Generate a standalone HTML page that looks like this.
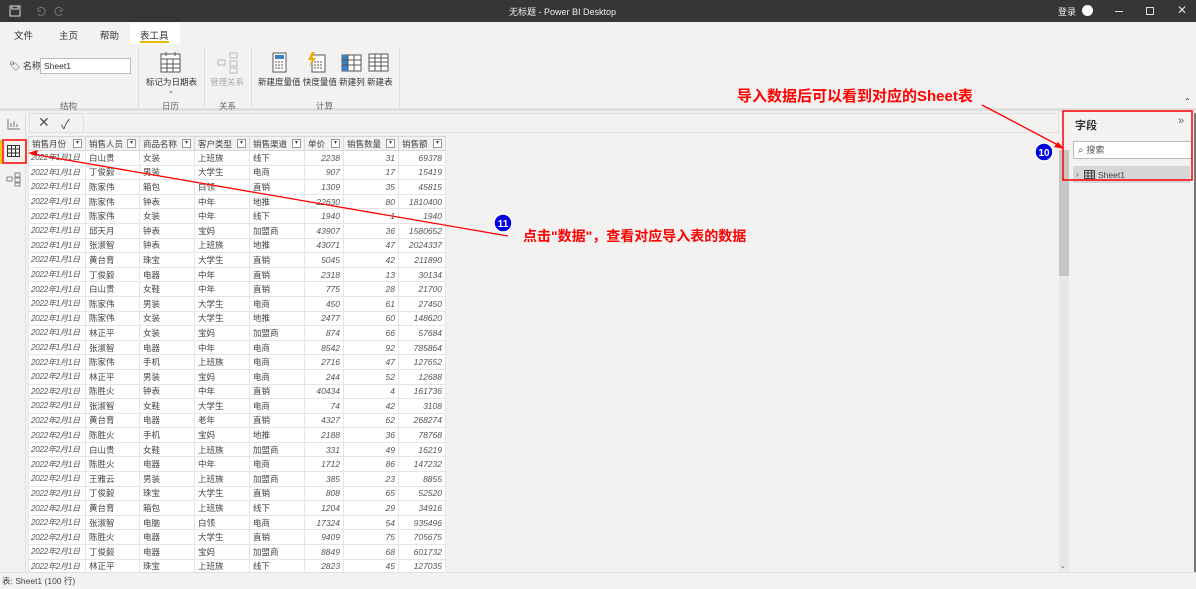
<!DOCTYPE html>
<html><head><meta charset="utf-8"><style>
*{margin:0;padding:0;box-sizing:border-box}
body{width:1196px;height:589px;overflow:hidden;background:#f3f2f1;font-family:"Liberation Sans","Noto Sans CJK SC",sans-serif;font-size:9px;color:#333;position:relative}
.a{position:absolute}
.tb{left:0;top:0;width:1196px;height:22px;background:#383634;color:#fff}
table{border-collapse:collapse;position:absolute;left:28px;top:136px;width:417px;background:#fff;table-layout:fixed}
td,th{height:14.6px;border:1px solid #e5e5e5;padding:0 3px;font-size:8.5px;white-space:nowrap;overflow:hidden;font-weight:normal;text-align:left;color:#444}
th{background:#f3f2f1;border-color:#d8d8d8;height:14px;position:relative}
th i{position:absolute;right:3px;top:2px;width:9px;height:9px;border:1px solid #999;background:#fff;font-style:normal;font-size:6px;line-height:7px;text-align:center}
td.d{font-style:italic;color:#555;font-size:8px;padding:0 1px 0 2px;letter-spacing:-0.2px}
td.n{text-align:right;font-style:italic;color:#555}
.red{color:#f00;font-weight:bold}
</style></head><body>
<div class="a tb">
<svg class="a" style="left:9px;top:5px" width="60" height="12"><rect x="1" y="1" width="10" height="10" fill="none" stroke="#ddd"/><rect x="3" y="1" width="6" height="3" fill="none" stroke="#ddd"/><path d="M30 3 a4 4 0 1 1 -1 6 M29 3 v3 h3" fill="none" stroke="#777"/><path d="M52 3 a4 4 0 1 0 1 6 M53 3 v3 h-3" fill="none" stroke="#777"/></svg>
<div class="a" style="left:509px;top:5px;font-size:9px;color:#eee">无标题 - Power BI Desktop</div>
<div class="a" style="left:1058px;top:5px;font-size:9px;color:#eee">登录</div>
<div class="a" style="left:1082px;top:5px;width:11px;height:11px;border-radius:50%;background:#fff"></div>
<div class="a" style="left:1115px;top:11px;width:8px;height:1px;background:#ddd"></div>
<div class="a" style="left:1146px;top:7px;width:8px;height:8px;border:1px solid #ddd"></div>
<div class="a" style="left:1177px;top:3px;font-size:12px;color:#ddd">✕</div>
</div>
<div class="a" style="left:14px;top:28px;font-size:9.5px">文件</div>
<div class="a" style="left:59px;top:28px;font-size:9.5px">主页</div>
<div class="a" style="left:100px;top:28px;font-size:9.5px">帮助</div>
<div class="a" style="left:130px;top:23px;width:50px;height:21px;background:#fff"></div>
<div class="a" style="left:140px;top:28px;font-size:9.5px">表工具</div>
<div class="a" style="left:140px;top:41px;width:29px;height:2px;background:#e8b700"></div>
<div class="a" style="left:0;top:44px;width:1196px;height:67px;background:#f3f2f1;border-bottom:3px solid #e1dfdd"></div>
<div class="a" style="left:9px;top:59px;font-size:9px">🏷 名称</div>
<div class="a" style="left:40px;top:58px;width:91px;height:16px;background:#fff;border:1px solid #bbb;padding:2px 3px;font-size:8.5px">Sheet1</div>
<div class="a" style="left:60px;top:100px;font-size:8.5px;color:#666">结构</div>
<div class="a" style="left:138px;top:48px;width:1px;height:60px;background:#ddd"></div>
<svg class="a" style="left:160px;top:52px" width="22" height="22"><rect x="1" y="2" width="19" height="18" fill="#fff" stroke="#555"/><path d="M1 7h19M1 12h19M1 16h19M7 7v13M13 7v13M6 0v4M15 0v4" stroke="#555"/></svg>
<div class="a" style="left:146px;top:76px;font-size:8.5px">标记为日期表</div>
<div class="a" style="left:168px;top:87px;font-size:7px">⌄</div>
<div class="a" style="left:162px;top:100px;font-size:8.5px;color:#666">日历</div>
<div class="a" style="left:204px;top:48px;width:1px;height:60px;background:#ddd"></div>
<svg class="a" style="left:217px;top:52px" width="22" height="22"><g fill="none" stroke="#bbb"><rect x="1" y="8" width="7" height="5"/><rect x="13" y="1" width="7" height="5"/><rect x="13" y="9" width="7" height="5"/><rect x="13" y="16" width="7" height="5"/></g></svg>
<div class="a" style="left:210px;top:76px;font-size:8.5px;color:#aaa">管理关系</div>
<div class="a" style="left:219px;top:100px;font-size:8.5px;color:#666">关系</div>
<div class="a" style="left:251px;top:48px;width:1px;height:60px;background:#ddd"></div>
<svg class="a" style="left:270px;top:52px" width="124" height="22"><rect x="3" y="1" width="13" height="19" fill="#fff" stroke="#555"/><rect x="5" y="3" width="9" height="4" fill="#3b7fc4"/><path d="M5 10h9M5 13h9M5 16h9" stroke="#555" stroke-dasharray="2 1"/><rect x="42" y="3" width="13" height="17" fill="#fff" stroke="#555"/><path d="M44 10h9M44 13h9M44 16h9" stroke="#555" stroke-dasharray="2 1"/><path d="M42 0l-4 8h4l-3 7 7-9h-4l3-6z" fill="#f2a900"/><rect x="72" y="3" width="19" height="16" fill="#fff" stroke="#555"/><rect x="72" y="3" width="6" height="16" fill="#3b7fc4"/><path d="M72 8h19M72 13h19M78 3v16M84 3v16" stroke="#555"/><rect x="99" y="2" width="19" height="17" fill="#fff" stroke="#555"/><path d="M99 6h19M99 10h19M99 14h19M105 2v17M111 2v17" stroke="#555"/></svg>
<div class="a" style="left:258px;top:76px;font-size:8.5px">新建度量值 快度量值 新建列 新建表</div>
<div class="a" style="left:316px;top:100px;font-size:8.5px;color:#666">计算</div>
<div class="a" style="left:399px;top:48px;width:1px;height:60px;background:#ddd"></div>
<div class="a" style="left:1184px;top:97px;font-size:8px">⌃</div>
<div class="a" style="left:0;top:113px;width:26px;height:460px;background:#f3f2f1;border-right:1px solid #e1dfdd"></div>
<svg class="a" style="left:7px;top:118px" width="14" height="12"><path d="M1 1v10h12M4 9V5M7 9V3M10 9V6" stroke="#777" fill="none"/></svg>
<div class="a" style="left:0;top:140px;width:2px;height:24px;background:#f2c811"></div>
<svg class="a" style="left:7px;top:145px" width="13" height="12"><rect x=".5" y=".5" width="12" height="11" fill="none" stroke="#333"/><path d="M0 4h13M0 8h13M4.5 1v11M8.5 1v11" stroke="#333"/></svg>
<svg class="a" style="left:6px;top:172px" width="15" height="15"><g fill="none" stroke="#888"><rect x="1" y="5" width="5" height="4"/><rect x="9" y="1" width="5" height="4"/><rect x="9" y="6" width="5" height="4"/><rect x="9" y="11" width="5" height="3"/></g></svg>
<div class="a" style="left:29px;top:113px;width:55px;height:20px;background:#f3f2f1;border:1px solid #e1dfdd"></div>
<div class="a" style="left:38px;top:114px;font-size:14px;color:#555">✕</div>
<div class="a" style="left:61px;top:114px;font-size:13px;color:#555">✓</div>
<div class="a" style="left:86px;top:113px;width:973px;height:20px;border:1px solid #e1dfdd;border-left:0"></div>
<table>
<colgroup><col style="width:57px"><col style="width:54px"><col style="width:55px"><col style="width:55px"><col style="width:55px"><col style="width:39px"><col style="width:55px"><col style="width:47px"></colgroup>
<tr><th>销售月份<i>▾</i></th><th>销售人员<i>▾</i></th><th>商品名称<i>▾</i></th><th>客户类型<i>▾</i></th><th>销售渠道<i>▾</i></th><th>单价<i>▾</i></th><th>销售数量<i>▾</i></th><th>销售额<i>▾</i></th></tr>
<tr><td class="d">2022年1月1日</td><td>白山贵</td><td>女装</td><td>上班族</td><td>线下</td><td class="n">2238</td><td class="n">31</td><td class="n">69378</td></tr>
<tr><td class="d">2022年1月1日</td><td>丁俊毅</td><td>男装</td><td>大学生</td><td>电商</td><td class="n">907</td><td class="n">17</td><td class="n">15419</td></tr>
<tr><td class="d">2022年1月1日</td><td>陈家伟</td><td>箱包</td><td>白领</td><td>直销</td><td class="n">1309</td><td class="n">35</td><td class="n">45815</td></tr>
<tr><td class="d">2022年1月1日</td><td>陈家伟</td><td>钟表</td><td>中年</td><td>地推</td><td class="n">22630</td><td class="n">80</td><td class="n">1810400</td></tr>
<tr><td class="d">2022年1月1日</td><td>陈家伟</td><td>女装</td><td>中年</td><td>线下</td><td class="n">1940</td><td class="n">1</td><td class="n">1940</td></tr>
<tr><td class="d">2022年1月1日</td><td>邱天月</td><td>钟表</td><td>宝妈</td><td>加盟商</td><td class="n">43907</td><td class="n">36</td><td class="n">1580652</td></tr>
<tr><td class="d">2022年1月1日</td><td>张淑智</td><td>钟表</td><td>上班族</td><td>地推</td><td class="n">43071</td><td class="n">47</td><td class="n">2024337</td></tr>
<tr><td class="d">2022年1月1日</td><td>黄台育</td><td>珠宝</td><td>大学生</td><td>直销</td><td class="n">5045</td><td class="n">42</td><td class="n">211890</td></tr>
<tr><td class="d">2022年1月1日</td><td>丁俊毅</td><td>电器</td><td>中年</td><td>直销</td><td class="n">2318</td><td class="n">13</td><td class="n">30134</td></tr>
<tr><td class="d">2022年1月1日</td><td>白山贵</td><td>女鞋</td><td>中年</td><td>直销</td><td class="n">775</td><td class="n">28</td><td class="n">21700</td></tr>
<tr><td class="d">2022年1月1日</td><td>陈家伟</td><td>男装</td><td>大学生</td><td>电商</td><td class="n">450</td><td class="n">61</td><td class="n">27450</td></tr>
<tr><td class="d">2022年1月1日</td><td>陈家伟</td><td>女装</td><td>大学生</td><td>地推</td><td class="n">2477</td><td class="n">60</td><td class="n">148620</td></tr>
<tr><td class="d">2022年1月1日</td><td>林正平</td><td>女装</td><td>宝妈</td><td>加盟商</td><td class="n">874</td><td class="n">66</td><td class="n">57684</td></tr>
<tr><td class="d">2022年1月1日</td><td>张淑智</td><td>电器</td><td>中年</td><td>电商</td><td class="n">8542</td><td class="n">92</td><td class="n">785864</td></tr>
<tr><td class="d">2022年1月1日</td><td>陈家伟</td><td>手机</td><td>上班族</td><td>电商</td><td class="n">2716</td><td class="n">47</td><td class="n">127652</td></tr>
<tr><td class="d">2022年2月1日</td><td>林正平</td><td>男装</td><td>宝妈</td><td>电商</td><td class="n">244</td><td class="n">52</td><td class="n">12688</td></tr>
<tr><td class="d">2022年2月1日</td><td>陈胜火</td><td>钟表</td><td>中年</td><td>直销</td><td class="n">40434</td><td class="n">4</td><td class="n">161736</td></tr>
<tr><td class="d">2022年2月1日</td><td>张淑智</td><td>女鞋</td><td>大学生</td><td>电商</td><td class="n">74</td><td class="n">42</td><td class="n">3108</td></tr>
<tr><td class="d">2022年2月1日</td><td>黄台育</td><td>电器</td><td>老年</td><td>直销</td><td class="n">4327</td><td class="n">62</td><td class="n">268274</td></tr>
<tr><td class="d">2022年2月1日</td><td>陈胜火</td><td>手机</td><td>宝妈</td><td>地推</td><td class="n">2188</td><td class="n">36</td><td class="n">78768</td></tr>
<tr><td class="d">2022年2月1日</td><td>白山贵</td><td>女鞋</td><td>上班族</td><td>加盟商</td><td class="n">331</td><td class="n">49</td><td class="n">16219</td></tr>
<tr><td class="d">2022年2月1日</td><td>陈胜火</td><td>电器</td><td>中年</td><td>电商</td><td class="n">1712</td><td class="n">86</td><td class="n">147232</td></tr>
<tr><td class="d">2022年2月1日</td><td>王雅云</td><td>男装</td><td>上班族</td><td>加盟商</td><td class="n">385</td><td class="n">23</td><td class="n">8855</td></tr>
<tr><td class="d">2022年2月1日</td><td>丁俊毅</td><td>珠宝</td><td>大学生</td><td>直销</td><td class="n">808</td><td class="n">65</td><td class="n">52520</td></tr>
<tr><td class="d">2022年2月1日</td><td>黄台育</td><td>箱包</td><td>上班族</td><td>线下</td><td class="n">1204</td><td class="n">29</td><td class="n">34916</td></tr>
<tr><td class="d">2022年2月1日</td><td>张淑智</td><td>电脑</td><td>白领</td><td>电商</td><td class="n">17324</td><td class="n">54</td><td class="n">935496</td></tr>
<tr><td class="d">2022年2月1日</td><td>陈胜火</td><td>电器</td><td>大学生</td><td>直销</td><td class="n">9409</td><td class="n">75</td><td class="n">705675</td></tr>
<tr><td class="d">2022年2月1日</td><td>丁俊毅</td><td>电器</td><td>宝妈</td><td>加盟商</td><td class="n">8849</td><td class="n">68</td><td class="n">601732</td></tr>
<tr><td class="d">2022年2月1日</td><td>林正平</td><td>珠宝</td><td>上班族</td><td>线下</td><td class="n">2823</td><td class="n">45</td><td class="n">127035</td></tr>
</table>
<div class="a" style="left:1059px;top:150px;width:10px;height:422px;background:#e8e8e8"></div>
<div class="a" style="left:1059px;top:150px;width:10px;height:126px;background:#c6c6c6"></div>
<div class="a" style="left:1060px;top:562px;font-size:7px;color:#555">⌄</div>
<div class="a" style="left:1069px;top:113px;width:127px;height:460px;background:#f3f2f1;border-right:2px solid #777"></div>
<div class="a" style="left:1075px;top:117px;font-size:11px;font-weight:bold;color:#333">字段</div>
<div class="a" style="left:1178px;top:115px;font-size:11px;color:#666">»</div>
<div class="a" style="left:1073px;top:141px;width:119px;height:18px;background:#fff;border:1px solid #bbb"></div>
<div class="a" style="left:1078px;top:143px;font-size:10px;color:#555">⌕ <span style="font-size:9px">搜索</span></div>
<div class="a" style="left:1073px;top:166px;width:117px;height:17px;background:#d6d6d6"></div>
<div class="a" style="left:1076px;top:169px;font-size:8.5px;color:#555">›</div>
<svg class="a" style="left:1084px;top:170px" width="11" height="9"><rect x=".5" y=".5" width="10" height="8" fill="none" stroke="#444"/><path d="M0 3h11M0 6h11M4 0v9M7.5 0v9" stroke="#444"/></svg>
<div class="a" style="left:1098px;top:170px;font-size:8.5px;color:#444">Sheet1</div>
<div class="a" style="left:0;top:572px;width:1196px;height:17px;background:#f3f2f1;border-top:1px solid #e1dfdd"></div>
<div class="a" style="left:2px;top:575px;font-size:8.5px;color:#444">表: Sheet1 (100 行)</div>
<svg class="a" style="left:0;top:0" width="1196" height="589">
<rect x="3" y="140" width="23" height="23" fill="none" stroke="#f00" stroke-width="1.5"/>
<rect x="1063" y="111" width="129" height="69" fill="none" stroke="#f00" stroke-width="1.5"/>
<line x1="508" y1="236" x2="32" y2="154" stroke="#f00" stroke-width="1.3"/>
<path d="M28 153 l10 -3 l-2 6z" fill="#f00"/>
<line x1="982" y1="105" x2="1058" y2="145" stroke="#f00" stroke-width="1.3"/>
<path d="M1064 149 l-10 -2 l4 -5z" fill="#f00"/>
<circle cx="1044" cy="152" r="9" fill="#0000e0" stroke="#fff" stroke-width="1.5"/>
<text x="1044" y="156" font-size="10" font-weight="bold" fill="#fff" text-anchor="middle" font-family="Liberation Sans">10</text>
<circle cx="503" cy="223" r="9" fill="#0000e0" stroke="#fff" stroke-width="1.5"/>
<text x="503" y="227" font-size="10" font-weight="bold" fill="#fff" text-anchor="middle" font-family="Liberation Sans">11</text>
</svg>
<div class="a red" style="left:737px;top:85px;font-size:15px">导入数据后可以看到对应的Sheet表</div>
<div class="a red" style="left:523px;top:226px;font-size:14px">点击"数据"，查看对应导入表的数据</div>
</body></html>
